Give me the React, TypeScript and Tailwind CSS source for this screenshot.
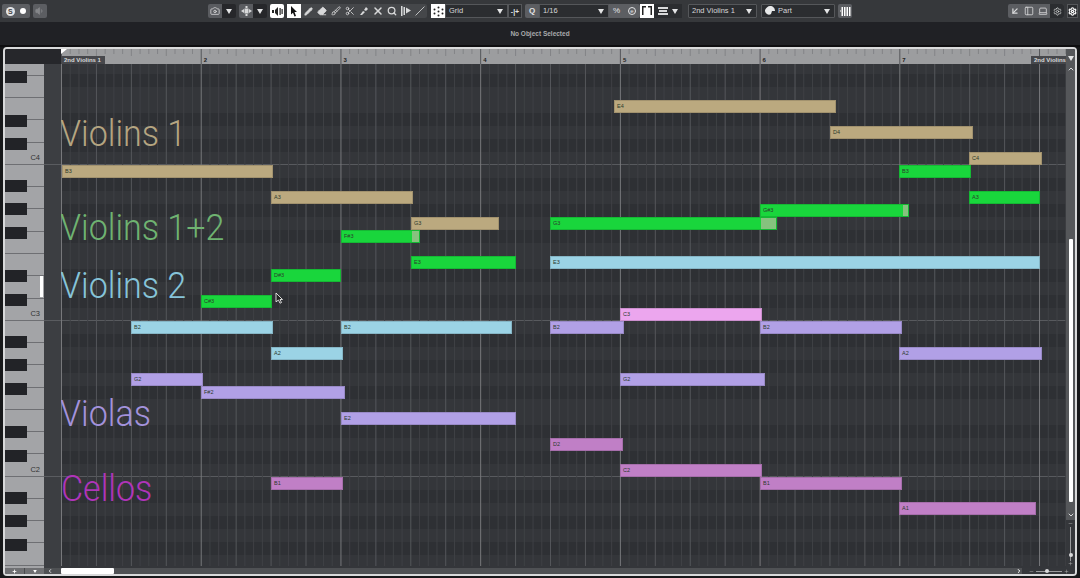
import React from "react";
import { Pencil, Eraser, Brush, Scissors, X, Search, Slash, Settings, ChevronUp, ChevronDown, ChevronLeft, ChevronRight, Plus, Minus, Camera, Volume1, ArrowDownLeft, PanelLeft, Laptop } from "lucide-react";

const tan = "bg-[#bba97f]", green = "bg-[#19d63c]", blue = "bg-[#9bd3e5]", purple = "bg-[#b1a0e6]", pink = "bg-[#eca6ee]", mauve = "bg-[#c07fc6]";

const notes: [number, number, number, string, string, number?][] = [
  [614, 835, 101, tan, "E4"], [830, 972, 127, tan, "D4"], [969, 1041, 153, tan, "C4"],
  [62, 272, 166, tan, "B3"], [899, 970, 166, green, "B3"], [271, 412, 192, tan, "A3"], [969, 1039, 192, green, "A3"],
  [760, 908, 205, green, "G#3", 5], [411, 498, 218, tan, "G3"], [550, 776, 218, green, "G3", 15], [341, 419, 231, green, "F#3", 7],
  [411, 515, 257, green, "E3"], [550, 1039, 257, blue, "E3"], [271, 340, 270, green, "D#3"], [201, 271, 296, green, "C#3"],
  [620, 761, 309, pink, "C3"], [131, 272, 322, blue, "B2"], [341, 511, 322, blue, "B2"], [550, 623, 322, purple, "B2"], [760, 901, 322, purple, "B2"],
  [271, 342, 348, blue, "A2"], [899, 1041, 348, purple, "A2"], [131, 202, 374, purple, "G2"], [620, 764, 374, purple, "G2"],
  [201, 344, 387, purple, "F#2"], [341, 515, 413, purple, "E2"], [550, 622, 439, mauve, "D2"], [620, 761, 465, mauve, "C2"],
  [271, 342, 478, mauve, "B1"], [760, 901, 478, mauve, "B1"], [899, 1035, 503, mauve, "A1"],
];

const labels: [string, number, number, string][] = [
  ["Violins 1", 60, 112, "text-[#b5a581]"], ["Violins 1+2", 60, 206, "text-[#6fb371]"], ["Violins 2", 60, 264, "text-[#86c4d9]"],
  ["Violas", 60, 392, "text-[#a392dc]"], ["Cellos", 61, 467, "text-[#b034ba]"],
];

const STEP = 139.72;
const lines = Array.from({ length: 116 }, (_, i) => i);
const lineColor = (i: number) => (i % 16 === 0 ? "#77787b" : i % 4 === 0 ? "#55575b" : "#3f4145");
const rows = Array.from({ length: 40 }, (_, i) => i - 7);
const isBlack = (k: number) => [1, 3, 6, 8, 10].includes((((-k) % 12) + 12) % 12);
const blackKeys = [71, 115, 138, 180, 203, 227, 270, 294, 336, 359, 383, 426, 450, 492, 515, 539];
const whiteKeys = Array.from({ length: 23 }, (_, i) => i);

function Tool({ children, on }: { children?: React.ReactNode; on?: boolean }) {
  return <div className={`w-[14px] h-[14px] flex items-center justify-center ${on ? "bg-white text-[#222]" : "text-[#d8d9da]"}`}>{children}</div>;
}

function Tri() {
  return <svg width="6" height="5" viewBox="0 0 6 5"><path d="M0 0h6L3 5z" fill="#e4e5e6" /></svg>;
}

function Select({ w, label, icon, className }: { w: string; label: string; icon?: React.ReactNode; className?: string }) {
  return (
    <div className={`${w} ${className ?? ""} h-[14px] border border-[#55575a] bg-[#2b2d30] flex items-center gap-[2px] pl-[3px] pr-[4px] text-[7.5px] text-[#d6d7d8] rounded-[1px]`}>
      {icon}
      <span className="flex-1">{label}</span>
      <Tri />
    </div>
  );
}

function DropTool({ icon }: { icon: React.ReactNode }) {
  return (
    <div className="flex h-[14px]">
      <div className="w-[14px] bg-[#5a5c60] flex items-center justify-center text-[#d8d9da] rounded-l-[2px]">{icon}</div>
      <div className="w-[14px] bg-[#26272a] flex items-center justify-center rounded-r-[2px]"><Tri /></div>
    </div>
  );
}

function Toolbar() {
  return (
    <div className="h-[22px] bg-[#36383b] flex items-center shrink-0">
      <div className="ml-[2px] w-[28px] h-[14px] bg-[#5c5e62] rounded-[2px] flex items-center justify-around px-[1px]">
        <div className="w-[9px] h-[9px] rounded-full bg-[#e4e5e6] text-[7px] font-bold text-[#444] flex items-center justify-center leading-none">S</div>
        <div className="w-[6px] h-[6px] rounded-full bg-white" />
      </div>
      <div className="ml-[3px] w-[14px] h-[14px] bg-[#5c5e62] rounded-[2px] flex items-center justify-center text-[#85878a]"><Volume1 size={10} fill="#85878a" /></div>

      <div className="ml-[161px]"><DropTool icon={<Camera size={10} />} /></div>
      <div className="ml-[3px]">
        <DropTool icon={<svg width="11" height="10" viewBox="0 0 11 10" fill="#d8d9da"><rect x="4.500" y="0" width="2" height="2" /><rect x="3.500" y="2.500" width="4" height="5" /><rect x="4.500" y="8" width="2" height="2" /><path d="M0 5l3-2v4zM11 5L8 3v4z" /></svg>} />
      </div>
      <div className="ml-[3px] rounded-[2px] overflow-hidden">
        <Tool on><svg width="11" height="9" viewBox="0 0 11 9" fill="#222"><rect x="0" y="3" width="2" height="3" /><path d="M3 3l3-3v9L3 6z" /><rect x="7.500" y="1" width="1.200" height="7" /><rect x="9.500" y="2" width="1.200" height="5" /></svg></Tool>
      </div>
      <div className="ml-[3px] flex items-center bg-[#45474a] rounded-[2px]">
        <Tool on><svg width="8" height="11" viewBox="0 0 8 11"><path d="M1 0l6 6H4.500l1.500 4-1.500.6L3 6.800 1 8.500z" fill="#111" /></svg></Tool>
        <Tool><Pencil size={9} fill="#d8d9da" /></Tool>
        <Tool><Eraser size={10} fill="#d8d9da" /></Tool>
        <Tool><Brush size={10} /></Tool>
        <Tool><Scissors size={10} /></Tool>
        <Tool><svg width="10" height="10" viewBox="0 0 10 10" fill="#d8d9da"><path d="M1 9l3-4 2 1-3 3zM5 4l2-3 2 2-2 2z" /></svg></Tool>
        <Tool><X size={12} strokeWidth={3} /></Tool>
        <Tool><Search size={10} strokeWidth={3} /></Tool>
        <Tool><svg width="10" height="10" viewBox="0 0 10 10" fill="#d8d9da"><rect x="0" y="0" width="1.500" height="10" /><rect x="2.500" y="1" width="1.500" height="8" /><path d="M5 1.500l5 3-5 3z" /></svg></Tool>
        <Tool><Slash size={10} /></Tool>
      </div>

      <div className="ml-[4px] flex items-center">
        <Tool on><svg width="11" height="11" viewBox="0 0 11 11" fill="#222"><circle cx="5.500" cy="1.500" r="1" /><circle cx="1.500" cy="3.500" r="1" /><circle cx="9.500" cy="3.500" r="1" /><circle cx="5.500" cy="5.500" r="1" /><circle cx="1.500" cy="7.500" r="1" /><circle cx="9.500" cy="7.500" r="1" /><circle cx="5.500" cy="9.500" r="1" /></svg></Tool>
        <Select w="w-[63px]" label="Grid" className="rounded-none" />
        <div className="w-[14px] h-[14px] border border-[#55575a] bg-[#2b2d30] flex items-center justify-center text-[#e4e5e6] text-[7px] leading-none">
          <span className="font-bold">-|+</span>
        </div>
      </div>
      <div className="ml-[3px] flex items-center">
        <div className="w-[14px] h-[14px] bg-[#5c5e62] flex items-center justify-center text-[8px] font-bold text-[#e4e5e6] rounded-l-[2px]">Q</div>
        <Select w="w-[70px]" label="1/16" className="rounded-none" />
        <div className="w-[31px] h-[14px] bg-[#5c5e62] flex items-center justify-around text-[8px] text-[#e4e5e6] rounded-r-[2px]"><span>%</span><span className="w-[8px] h-[8px] rounded-full border border-[#e4e5e6] text-[6px] leading-[6px] text-center">e</span></div>
      </div>
      <div className="flex items-center">
        <Tool on><svg width="10" height="10" viewBox="0 0 10 10" fill="#222"><rect x="0" y="0" width="4" height="1.500" /><rect x="6" y="0" width="4" height="1.500" /><rect x="0" y="0" width="1.500" height="9" /><rect x="8.500" y="0" width="1.500" height="9" /></svg></Tool>
        <div className="w-[28px] h-[14px] bg-[#2b2d30] flex items-center justify-around px-[2px]">
          <svg width="10" height="9" viewBox="0 0 10 9" fill="#d8d9da"><rect y="0" width="10" height="2" /><rect x="1" y="3" width="8" height="2" /><rect y="6" width="10" height="2" /></svg>
          <Tri />
        </div>
      </div>
      <Select w="w-[69px]" label="2nd Violins 1" className="ml-[6px]" />
      <Select w="w-[74px]" label="Part" className="ml-[4px]" icon={<svg width="11" height="10" viewBox="0 0 11 10" fill="#e8e9ea"><path d="M5 0c3 0 5 2 5 5H7l-1 3c-1 1-3 1-4 0C0 7 0 5 0 4c1-2 3-4 5-4z" /></svg>} />
      <div className="ml-[3px] w-[14px] h-[14px] bg-[#5c5e62] rounded-[2px] flex items-center justify-center">
        <svg width="11" height="9" viewBox="0 0 11 9" fill="#fff"><rect x="1.500" y="0" width="1.500" height="9" /><rect x="4" y="0" width="1.500" height="9" /><rect x="6.500" y="0" width="1.500" height="9" /><rect x="9" y="0" width="1.500" height="9" /><path d="M0 3l1 1-1 1z" /></svg>
      </div>

      <div className="ml-[156px] h-[14px] flex bg-[#5c5e62] rounded-[2px] overflow-hidden text-[#d8d9da]">
        <Tool><ArrowDownLeft size={10} strokeWidth={3} /></Tool>
        <Tool><PanelLeft size={10} /></Tool>
        <Tool><Laptop size={10} /></Tool>
        <div className="w-[14px] h-[14px] bg-[#2b2d30] flex items-center justify-center"><Settings size={9} /></div>
      </div>
      <div className="ml-[3px] w-[11px] h-[14px] bg-[#2b2d30] border border-[#55575a] flex items-center justify-center text-white"><Settings size={9} strokeWidth={3} /></div>
    </div>
  );
}

function Ruler() {
  return (
    <div className="flex h-[15px] shrink-0 bg-[#26272b]">
      <div className="w-[56px] shrink-0" />
      <div className="relative flex-1 bg-[#9c9d9f] overflow-hidden">
        <svg className="absolute inset-0" width="1006" height="15">
          {lines.map(i => <line key={i} x1={i * STEP / 16 + 0.5} x2={i * STEP / 16 + 0.5} y1="0" y2={i % 16 === 0 ? 15 : i % 4 === 0 ? 7 : 5} stroke={i % 16 === 0 ? "#55565a" : "#838487"} />)}
          <path d="M0 0h6L0 5z" fill="#fff" />
        </svg>
        {[2, 3, 4, 5, 6, 7].map((n, i) => (
          <span key={n} style={{ left: STEP * (i + 1) + 3 }} className="absolute top-[7px] text-[6px] font-bold leading-[8px] text-[#222]">{n}</span>
        ))}
        <div className="absolute left-0 top-[7px] w-[44px] h-[8px] bg-[#47484c] text-[6px] font-bold leading-[8px] text-[#d8d9da] pl-[3px]">2nd Violins 1</div>
        <div className="absolute right-0 top-[7px] w-[35px] h-[8px] bg-[#47484c] text-[6px] font-bold leading-[8px] text-[#d8d9da] pl-[3px] whitespace-nowrap overflow-hidden">2nd Violins</div>
      </div>
      <div className="w-[9px] shrink-0 bg-[#55575a] flex items-start justify-center pt-[7px]"><Tri /></div>
    </div>
  );
}

function Keyboard() {
  return (
    <div className="relative w-[39px] shrink-0 bg-[#a3a4a7] overflow-hidden">
      <div className="flex flex-col -mt-[10.4px]">
        {whiteKeys.map(i => <div key={i} className="h-[22.28px] shrink-0 border-b border-[#6e6f73]" />)}
      </div>
      {blackKeys.map(y => <div key={y} style={{ top: y - 64 }} className="absolute left-0 w-[22px] h-[12px] bg-[#222327]" />)}
      <div className="absolute right-[1px] top-[212px] w-[3px] h-[21px] bg-white" />
      {[["C4", 89], ["C3", 245], ["C2", 401]].map(([t, y]) => (
        <span key={t} style={{ top: y as number }} className="absolute right-[4px] text-[7.5px] leading-[9px] text-[#333]">{t}</span>
      ))}
    </div>
  );
}

function Strip() {
  return (
    <div className="w-[17px] shrink-0 bg-[#3c3e42] overflow-hidden">
      <div className="flex flex-col -mt-[3px]">
        {rows.map(k => <div key={k} className={`h-[13px] shrink-0 ${((k % 12) + 12) % 12 === 0 ? "border-b border-[#5a5c60]" : ""}`} />)}
      </div>
    </div>
  );
}

function Grid() {
  return (
    <div className="relative flex-1 overflow-hidden bg-[#34363a]">
      <div className="flex flex-col -mt-[3px]">
        {rows.map(k => (
          <div key={k} className={`h-[13px] shrink-0 ${isBlack(k) ? "bg-[#2e3034]" : "bg-[#34363a]"} ${((k % 12) + 12) % 12 === 0 ? "border-b border-[#585a5e]" : ""}`} />
        ))}
      </div>
      <svg className="absolute inset-0" width="1006" height="502">
        {lines.map(i => <line key={i} x1={i * STEP / 16 + 0.5} x2={i * STEP / 16 + 0.5} y1="0" y2="502" stroke={lineColor(i)} />)}
      </svg>
      {labels.map(([t, x, y, c]) => (
        <span key={t} style={{ left: x - 61, top: y - 64 }} className={`absolute origin-left scale-x-[0.92] text-[37px] leading-[44px] font-light whitespace-nowrap font-['Roboto',sans-serif] ${c}`}>{t}</span>
      ))}
      {notes.map(([a, b, y, c, t, tail], i) => (
        <div key={i} style={{ left: a - 61, top: y - 65, width: b - a + 1 }} className={`absolute h-[13px] border border-[#00000022] overflow-hidden ${c}`}>
          <span className="absolute left-[2px] top-0 text-[5.5px] leading-[11px] text-[#2c3a2c]">{t}</span>
          {tail ? <div style={{ width: tail }} className="absolute right-0 top-0 bottom-0 bg-[#86c27e]" /> : null}
        </div>
      ))}
      <svg className="absolute left-[214px] top-[228px]" width="9" height="12" viewBox="0 0 9 12"><path d="M1 1l6.500 6.500H5l1.500 3-1.500.7L3.500 8 1 9.800z" fill="#222" stroke="#fff" strokeWidth="0.8" /></svg>
    </div>
  );
}

function VScroll() {
  return (
    <div className="w-[9px] shrink-0 bg-[#35373b] flex flex-col items-center">
      <div className="h-[456px] w-full shrink-0 bg-[#55575a] flex flex-col items-center">
        <ChevronUp size={8} className="text-[#d8d9da] mt-[1px]" strokeWidth={3} />
        <div className="mt-[166px] w-[4px] h-[263px] bg-white rounded-[1px]" />
        <ChevronDown size={8} className="text-[#d8d9da] mt-[9px]" strokeWidth={3} />
      </div>
      <Minus size={5} className="text-[#bbb] mt-[1px]" />
      <div className="relative w-[1px] h-[34px] bg-[#9a9b9d] mt-[1px]">
        <div className="absolute -left-[1.5px] top-[26px] w-[4px] h-[4px] rounded-full bg-[#d8d9da]" />
      </div>
      <Plus size={5} className="text-[#bbb]" />
    </div>
  );
}

function Footer() {
  return (
    <div className="flex h-[6px] shrink-0 bg-[#4f5154]">
      <div className="w-[39px] shrink-0 bg-[#6f7073] flex">
        <div className="flex-1 flex items-center justify-center border-r border-[#4a4c4f]"><Plus size={5} className="text-white" strokeWidth={4} /></div>
        <div className="flex-1 flex items-center justify-center"><svg width="4" height="3" viewBox="0 0 6 5"><path d="M0 0h6L3 5z" fill="#fff" /></svg></div>
      </div>
      <div className="w-[17px] shrink-0 flex items-center pl-[3px]"><ChevronLeft size={6} strokeWidth={4} className="text-[#d8d9da]" /></div>
      <div className="w-[53px] bg-white rounded-[1px]" />
      <div className="flex-1 flex items-center justify-end"><ChevronRight size={6} strokeWidth={4} className="text-white" /></div>
      <div className="w-[53px] shrink-0 bg-[#35373b] flex items-center justify-center gap-[2px]">
        <Minus size={5} className="text-[#bbb]" />
        <div className="relative w-[26px] h-[1px] bg-[#9a9b9d]"><div className="absolute left-[9px] -top-[1.5px] w-[4px] h-[4px] rounded-full bg-[#d8d9da]" /></div>
        <Plus size={5} className="text-[#bbb]" />
      </div>
    </div>
  );
}

export default function App() {
  return (
    <div className="w-[1080px] h-[578px] bg-[#17181a] flex flex-col overflow-hidden font-['Liberation_Sans',sans-serif]">
      <Toolbar />
      <div className="h-[23px] shrink-0 bg-[#202125] flex items-center justify-center text-[6.5px] font-bold text-[#a9aaac]">No Object Selected</div>
      <div className="h-[2px] shrink-0 bg-[#0e0e10]" />
      <div className="ml-[3px] w-[1074px] h-[529px] border-2 border-[#d8d9da] rounded-[4px] flex flex-col overflow-hidden bg-[#26272b]">
        <Ruler />
        <div className="flex flex-1 min-h-0">
          <Keyboard />
          <Strip />
          <Grid />
          <VScroll />
        </div>
        <Footer />
      </div>
    </div>
  );
}
